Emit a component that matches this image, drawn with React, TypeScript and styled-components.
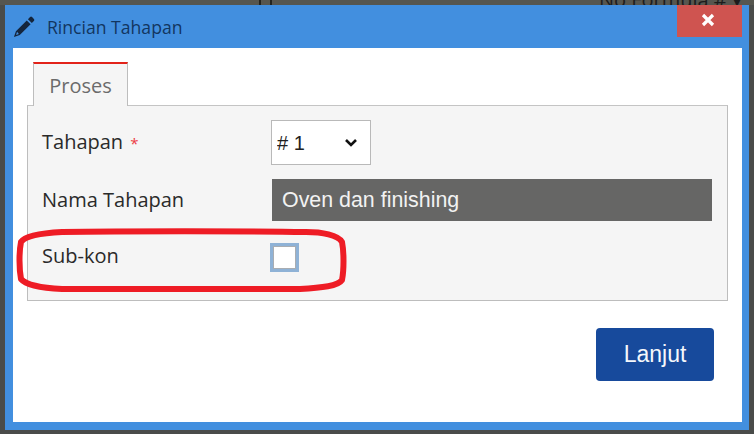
import { FC } from 'react';
import styled, { createGlobalStyle } from 'styled-components';

const GlobalStyle = createGlobalStyle`
  html, body {
    margin: 0;
    padding: 0;
    width: 754px;
    height: 434px;
    overflow: hidden;
    background: #4a4c4a;
  }
`;

const Page = styled.div`
  position: relative;
  width: 754px;
  height: 434px;
  padding: 0 5px;
  box-sizing: border-box;
  overflow: hidden;
  font-family: 'Open Sans', 'Noto Sans', sans-serif;
`;

const BackStrip = styled.div`
  height: 5px;
  margin: 0 -5px;
  overflow: hidden;
  background: #56564f;
  display: flex;
  padding-right: 12px;
  box-sizing: border-box;
`;

const BackMark = styled.span<{ $left: number }>`
  width: 2px;
  height: 5px;
  margin-left: ${({ $left }) => $left}px;
  background: #24241f;
  flex: none;
`;

const BackText = styled.span`
  margin-left: auto;
  font-size: 20px;
  line-height: 10px;
  margin-top: -5px;
  color: #1c1c1c;
  white-space: nowrap;
`;

const Window = styled.div`
  height: 425px;
  box-sizing: border-box;
  background: #428fdf;
  padding: 0 7px 8px 8px;
  display: flex;
  flex-direction: column;
`;

const TitleBar = styled.div`
  height: 43px;
  flex: none;
  display: flex;
  align-items: flex-start;
`;

const PencilIcon = styled.svg`
  width: 22px;
  height: 22px;
  margin-top: 11px;
  fill: #14253c;
  flex: none;
`;

const Title = styled.div`
  margin-left: 12px;
  margin-top: 11px;
  font-size: 17.6px;
  line-height: 22px;
  color: #12365f;
`;

const CloseButton = styled.button`
  margin-left: auto;
  width: 65px;
  height: 32px;
  border: 0;
  padding: 0 4px 2px 0;
  background: #cf5450;
  display: flex;
  align-items: center;
  justify-content: center;
`;

const Body = styled.div`
  flex: 1;
  background: #fff;
  padding: 14px 14px 0;
  display: flex;
  flex-direction: column;
`;

const TabRow = styled.div`
  display: flex;
  padding-left: 6px;
  margin-bottom: -1px;
  position: relative;
`;

const Tab = styled.div`
  width: 95px;
  height: 44px;
  box-sizing: border-box;
  background: #f5f5f5;
  border: 1px solid #bdbdbd;
  border-top: 2px solid #e2231a;
  border-bottom: 0;
  color: #6b6b6b;
  font-size: 20px;
  line-height: 44px;
  text-align: center;
`;

const Panel = styled.div`
  width: 701px;
  height: 196px;
  box-sizing: border-box;
  background: #f5f5f5;
  border: 1px solid #bdbdbd;
  border-top-color: #c4c4c4;
  padding: 14px 15px 0 14px;
  display: flex;
  flex-direction: column;
`;

const Row = styled.div<{ $height: number; $gap: number }>`
  height: ${({ $height }) => $height}px;
  margin-top: ${({ $gap }) => $gap}px;
  display: flex;
  align-items: center;
`;

const Label = styled.label<{ $lift: number }>`
  width: 229px;
  flex: none;
  font-size: 20px;
  line-height: 28px;
  margin-top: ${({ $lift }) => -$lift}px;
  color: #2a2a2a;
`;

const Required = styled.span`
  margin-left: 2px;
  color: #ec3a44;
  font-size: 15px;
`;

const SelectWrap = styled.div`
  position: relative;
  width: 100px;
  height: 45px;
`;

const Select = styled.select`
  appearance: none;
  width: 100%;
  height: 100%;
  box-sizing: border-box;
  border: 1px solid #b9b9b9;
  border-radius: 0;
  background: #fff;
  padding: 0 0 0 5px;
  font-family: 'Liberation Sans', Arial, sans-serif;
  font-size: 20px;
  color: #222;
`;

const Chevron = styled.svg`
  position: absolute;
  top: 18px;
  right: 13px;
  width: 14px;
  height: 10px;
  pointer-events: none;
`;

const ReadOnlyInput = styled.input`
  width: 440px;
  height: 42px;
  box-sizing: border-box;
  margin-left: 1px;
  border: 0;
  background: #666665;
  padding: 0 10px;
  font-family: 'Liberation Sans', Arial, sans-serif;
  font-size: 21.4px;
  color: #f2f2f2;
`;

const Checkbox = styled.input`
  appearance: none;
  width: 29px;
  height: 29px;
  box-sizing: border-box;
  margin: 0 0 0 -1px;
  background: #fff;
  border: 3px solid #8fb2d6;
  box-shadow: inset 0 0 0 1px #a9adb2;
`;

const Footer = styled.div`
  display: flex;
  justify-content: flex-end;
  padding: 27px 14px 0 0;
`;

const PrimaryButton = styled.button`
  width: 118px;
  height: 53px;
  padding: 0;
  border: 0;
  border-radius: 4px;
  background: #174a9c;
  color: #f4f7fb;
  font-family: 'Liberation Sans', Arial, sans-serif;
  font-size: 23px;
`;

const Annotation = styled.svg`
  position: absolute;
  inset: 0;
  width: 754px;
  height: 434px;
  pointer-events: none;
  fill: none;
  stroke: #ee1c25;
  stroke-width: 6;
  stroke-linejoin: round;
`;

const App: FC = () => (
  <Page>
    <GlobalStyle />
    <BackStrip>
      <BackMark $left={259} />
      <BackMark $left={9} />
      <BackText>No Formula # ▾</BackText>
    </BackStrip>
    <Window>
      <TitleBar>
        <PencilIcon viewBox="0 0 24 24">
          <path d="M18.6 1.2a1.6 1.6 0 0 1 2.2 0l2 2a1.6 1.6 0 0 1 0 2.2l-2.3 2.3-4.2-4.2zM15 4.8l4.2 4.2L7.4 20.8 1 23l2.2-6.4zM4.4 17.2l-1 3.4 3-1.1z" />
        </PencilIcon>
        <Title>Rincian Tahapan</Title>
        <CloseButton aria-label="Tutup">
          <svg width="14" height="14" viewBox="0 0 14 14">
            <path d="M2 2l10 10M12 2L2 12" stroke="#fff" strokeWidth="3.2" fill="none" />
          </svg>
        </CloseButton>
      </TitleBar>
      <Body>
        <TabRow>
          <Tab>Proses</Tab>
        </TabRow>
        <Panel>
          <Row $height={45} $gap={0}>
            <Label $lift={1}>
              Tahapan <Required>*</Required>
            </Label>
            <SelectWrap>
              <Select defaultValue="1">
                <option value="1"># 1</option>
              </Select>
              <Chevron viewBox="0 0 14 10">
                <path d="M2 2l5 5 5-5" stroke="#111" strokeWidth="2.6" fill="none" />
              </Chevron>
            </SelectWrap>
          </Row>
          <Row $height={42} $gap={14}>
            <Label $lift={1}>Nama Tahapan</Label>
            <ReadOnlyInput readOnly value="Oven dan finishing" />
          </Row>
          <Row $height={29} $gap={22}>
            <Label $lift={3}>Sub-kon</Label>
            <Checkbox type="checkbox" />
          </Row>
        </Panel>
        <Footer>
          <PrimaryButton>Lanjut</PrimaryButton>
        </Footer>
      </Body>
    </Window>
    <Annotation viewBox="0 0 754 434">
      <path d="M62 232C120 231 250 231 306 232C322 232 338 235 342 242C344 252 344 270 342 280C338 286 322 288 300 289C240 289 120 289 62 289C42 288 26 285 21 279C19 268 19 252 21 242C25 236 42 233 62 232Z" />
    </Annotation>
  </Page>
);

export default App;
